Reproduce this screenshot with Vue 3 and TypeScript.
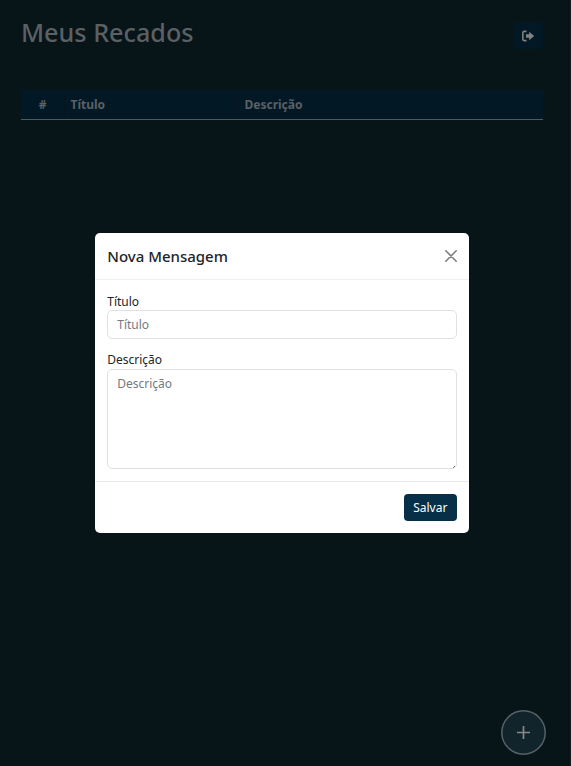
<script setup lang="ts">
import { ref } from 'vue'

const title = ref('')
const description = ref('')
const columns: string[] = ['#', 'Título', 'Descrição']
</script>

<template>
  <div class="page">
    <header class="top">
      <h1>Meus Recados</h1>
      <button class="logout" type="button" aria-label="Sair">
        <svg viewBox="0 0 24 24" width="14" height="14">
          <path d="M9.5 4H5.5Q3.2 4 3.2 6.3V17.7Q3.2 20 5.5 20H9.5" fill="none" stroke="currentColor" stroke-width="2.8" />
          <path d="M8.5 9.2H14V4.7L22.6 12L14 19.3V14.8H8.5Z" fill="currentColor" />
        </svg>
      </button>
    </header>
    <div class="table-head">
      <div v-for="column in columns" :key="column" class="cell">{{ column }}</div>
    </div>
    <button class="add" type="button" aria-label="Adicionar">
      <svg viewBox="0 0 45 45" width="45" height="45">
        <circle cx="22.5" cy="22.5" r="21.7" fill="#11242b" stroke="#586167" stroke-width="1.5" />
        <path d="M22.5 16V29M16 22.5H29" fill="none" stroke="currentColor" stroke-width="1.7" />
      </svg>
    </button>

    <div class="overlay">
      <form class="modal" @submit.prevent>
        <div class="modal-header">
          <h2>Nova Mensagem</h2>
          <button class="close" type="button" aria-label="Fechar">
            <svg viewBox="0 0 12 12" width="12" height="12">
              <path d="M.8 .8L11.2 11.2M11.2 .8L.8 11.2" fill="none" stroke="currentColor" stroke-width="1.6" stroke-linecap="round" />
            </svg>
          </button>
        </div>
        <div class="modal-body">
          <label for="title">Título</label>
          <input id="title" v-model="title" type="text" placeholder="Título" />
          <label for="description">Descrição</label>
          <div class="area">
            <textarea id="description" v-model="description" placeholder="Descrição"></textarea>
            <svg class="grip" viewBox="0 0 3 3" width="3" height="3">
              <path d="M0 2h1v1h-1zM1 1h1v1h-1z" fill="#777" />
            </svg>
          </div>
        </div>
        <div class="modal-footer">
          <button class="save" type="submit">Salvar</button>
        </div>
      </form>
    </div>
  </div>
</template>

<style>
body {
  background: #071418;
}
</style>

<style scoped>
* {
  box-sizing: border-box;
}

.page {
  position: relative;
  height: 766px;
  padding: 16px 27px 0 21px;
  overflow: hidden;
  border-right: 1px solid #161f21;
  background: #071418;
  color: #5b6065;
  font-family: "Noto Sans", sans-serif;
  font-size: 12px;
  line-height: 18px;
}

h1,
h2 {
  margin: 0;
}

button {
  padding: 0;
  font: inherit;
}

.top {
  display: flex;
  justify-content: space-between;
  height: 74px;
}

h1 {
  font-size: 25.2px;
  font-weight: 500;
  line-height: 33px;
}

.logout {
  display: flex;
  align-items: center;
  justify-content: center;
  width: 30px;
  height: 27px;
  margin-top: 6px;
  border: 0;
  border-radius: 4px;
  background: #021825;
  color: #808080;
}

.table-head {
  display: grid;
  grid-template-columns: 43.5px 174px 1fr;
  height: 30px;
  border-bottom: 1px solid #50595e;
  background: #021825;
  font-weight: 700;
}

.cell {
  padding: 6px 6px 0;
  border-right: 1px solid #04151f;
}

.cell:first-child {
  padding-left: 7px;
  text-align: center;
}

.cell:last-child {
  border-right: 0;
}

.add {
  position: absolute;
  right: 24px;
  bottom: 11px;
  display: flex;
  border: 0;
  background: none;
  color: #888;
}

.overlay {
  position: absolute;
  inset: 0;
  display: flex;
  align-items: center;
  justify-content: center;
  padding-right: 6px;
}

.modal {
  width: 373.5px;
  height: 300px;
  border-radius: 5px;
  background: #fff;
  color: #212529;
}

.modal-header {
  display: flex;
  align-items: center;
  justify-content: space-between;
  height: 47px;
  padding: 0 12px;
  border-bottom: 1px solid #f0f2f4;
}

h2 {
  font-size: 15px;
  font-weight: 500;
  line-height: 22px;
}

.close {
  display: flex;
  border: 0;
  background: none;
  color: #7f7f7f;
}

.modal-body {
  display: flex;
  flex-direction: column;
  height: 201px;
  padding: 12px 12px 0;
}

input,
textarea {
  display: block;
  width: 100%;
  margin: 0;
  padding: 4px 9px;
  border: 1px solid #dee2e6;
  border-radius: 5px;
  background: #fff;
  color: #212529;
  font: inherit;
}

input {
  height: 29px;
  margin-bottom: 11px;
}

.area {
  position: relative;
  margin-top: 1px;
}

textarea {
  height: 100px;
  padding-top: 5px;
  resize: none;
}

.grip {
  position: absolute;
  right: 1px;
  bottom: 1px;
}

input::placeholder,
textarea::placeholder {
  color: #73797f;
}

label {
  height: 18px;
  line-height: 19px;
}

.modal-footer {
  display: flex;
  justify-content: flex-end;
  height: 52px;
  padding: 12px;
  border-top: 1px solid #e6eaee;
}

.save {
  width: 53px;
  height: 27px;
  border: 0;
  border-radius: 4px;
  background: #073048;
  color: #fff;
}
</style>
